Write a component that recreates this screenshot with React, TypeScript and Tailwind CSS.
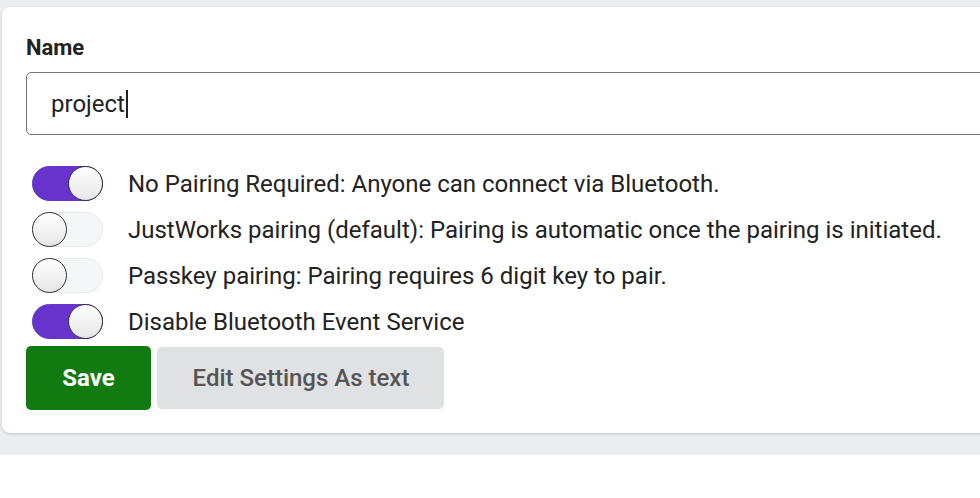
const Toggle = ({ on }: { on: boolean }) => (
  <div
    className={`relative h-[35px] w-[71px] shrink-0 rounded-full border ${
      on ? "border-[#6633cc] bg-[#6633cc]" : "border-[#e6e9ec] bg-[#f5f6f7]"
    }`}
  >
    <div
      className={`absolute top-[-1px] h-[35px] w-[35px] rounded-full border-[1.5px] border-[#333] bg-gradient-to-b from-white to-[#e6e6e6] ${
        on ? "right-[-1px]" : "left-[-1px]"
      }`}
    />
  </div>
);

const options = [
  { on: true, label: "No Pairing Required: Anyone can connect via Bluetooth." },
  { on: false, label: "JustWorks pairing (default): Pairing is automatic once the pairing is initiated." },
  { on: false, label: "Passkey pairing: Pairing requires 6 digit key to pair." },
  { on: true, label: "Disable Bluetooth Event Service" },
];

export default function App() {
  return (
    <div className="h-[498px] w-[980px] overflow-hidden bg-white font-['Roboto',sans-serif]">
      <div className="h-[455px] bg-[#eaeeef] pl-[2px] pt-[7px]">
        <div className="w-[1000px] rounded-lg bg-white pb-[23px] pl-[24px] pt-[28px] shadow-[0_1px_3px_rgba(0,0,0,0.18)]">
          <label className="block text-[22px] font-bold leading-[26px] text-[#222]">Name</label>
          <div className="mt-[11px] flex h-[63px] items-center rounded-[5px] border border-[#777] pl-[24px] text-[24px] text-[#222]">
            project<span className="ml-[1px] inline-block h-[28px] w-[2px] bg-[#222]" />
          </div>
          <div className="mt-[31px] flex flex-col gap-[11px] pl-[6px]">
            {options.map((o) => (
              <div key={o.label} className="flex items-center gap-[25px]">
                <Toggle on={o.on} />
                <span className="text-[24px] leading-[28px] text-[#222]">{o.label}</span>
              </div>
            ))}
          </div>
          <div className="mt-[7px] flex items-center gap-[6px]">
            <button className="h-[64px] w-[125px] rounded-[5px] bg-[#117a11] text-[24px] font-bold text-white">
              Save
            </button>
            <button className="h-[62px] w-[287px] rounded-[5px] bg-[#e0e1e3] pl-[1px] text-[24px] font-medium text-[#555]">
              Edit Settings As text
            </button>
          </div>
        </div>
      </div>
    </div>
  );
}
